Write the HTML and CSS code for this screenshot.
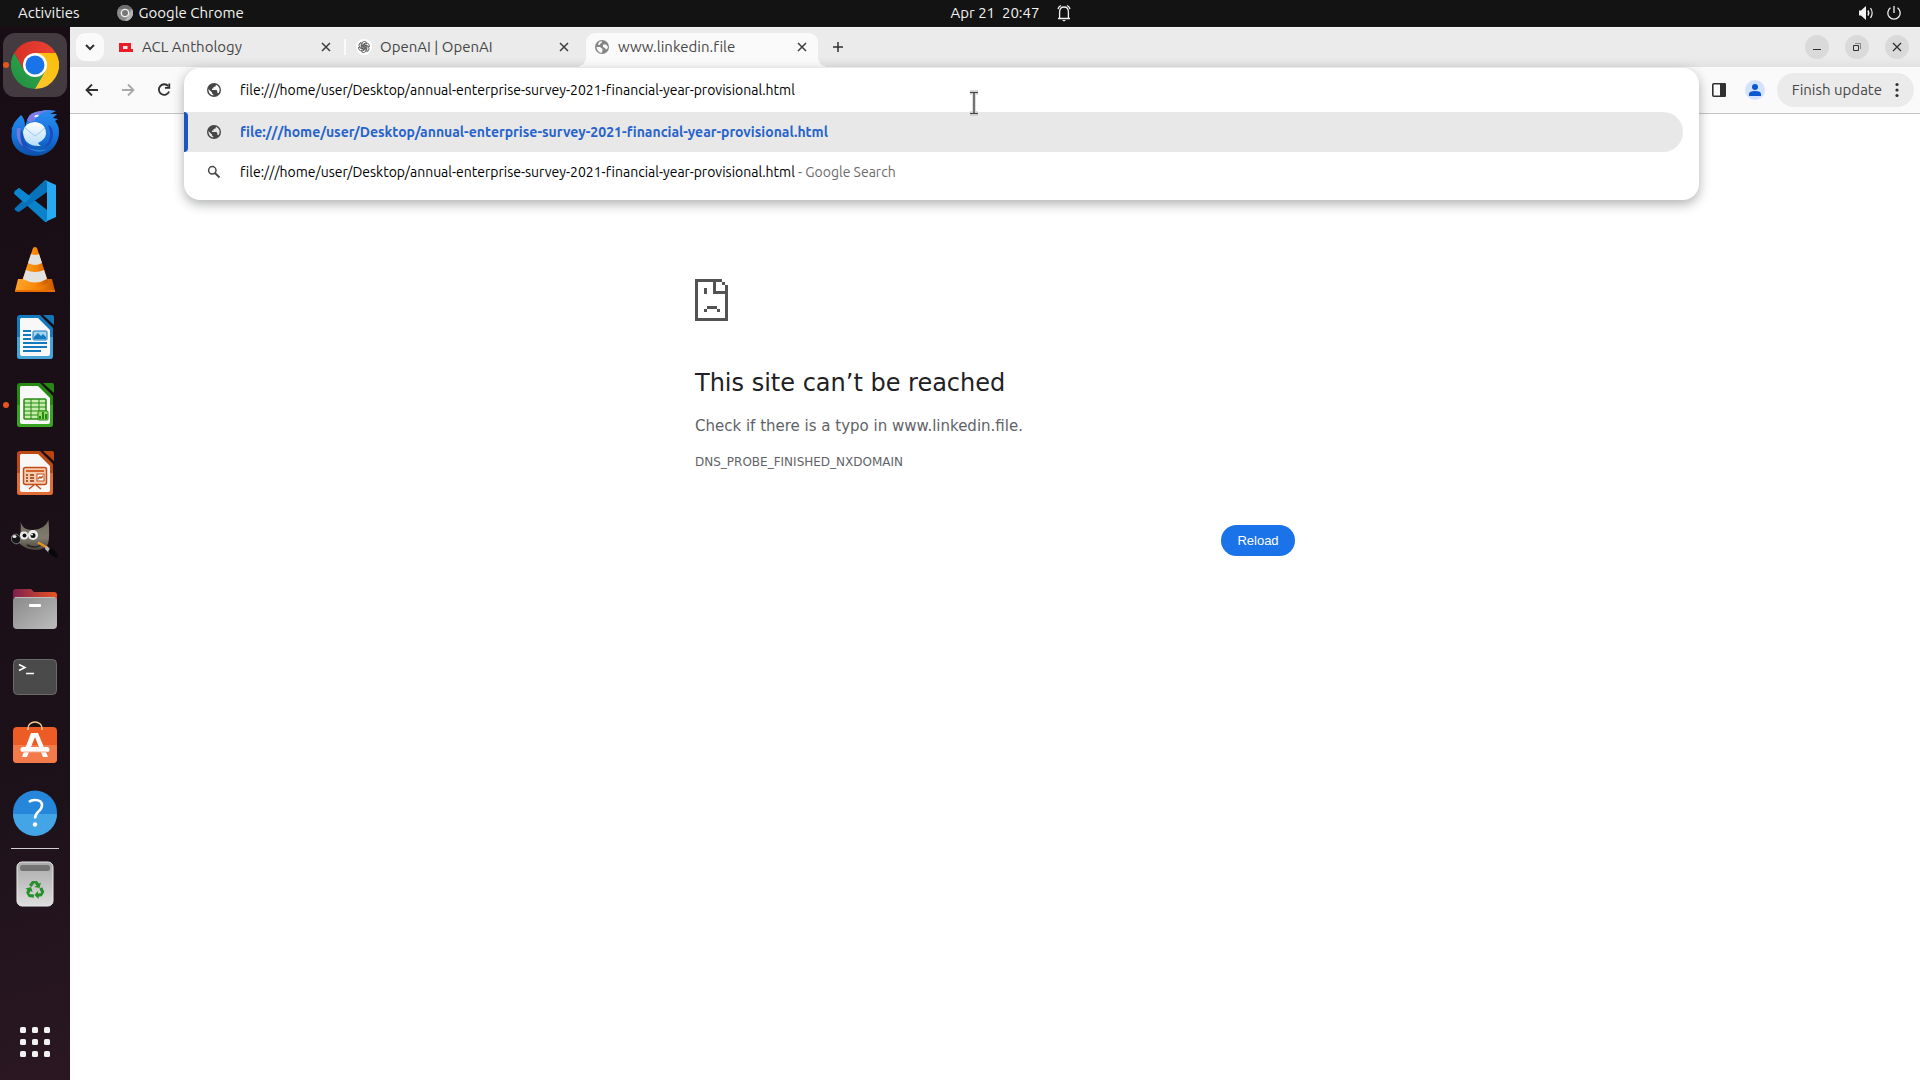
FILE: index.html
```html
<!DOCTYPE html>
<html lang="en">
<head>
<meta charset="utf-8">
<title>www.linkedin.file</title>
<link rel="stylesheet" href="styles.css">
</head>
<body>
<header class="topbar">
  <div class="topbar-left">
    <button class="bar-button">Activities</button>
    <button class="bar-button app-menu">
      <svg width="16" height="16" viewBox="0 0 48 48"><circle cx="24" cy="24" r="24" fill="#8a8a8a"/><path d="M3 12A24 24 0 0 1 45 12H24Z" fill="#6d6d6d"/><path d="M45 12A24 24 0 0 1 24 48L35 29Z" fill="#b5b5b5"/><circle cx="24" cy="24" r="11" fill="#777" stroke="#f2f2f2" stroke-width="4"/></svg>
      Google Chrome
    </button>
  </div>
  <button class="bar-button clock">
    <span>Apr 21&nbsp; 20:47</span>
    <svg width="16" height="18" viewBox="0 0 16 18" fill="none" stroke="#f2f2f2" stroke-width="1.3"><path d="M2 14.5H14M3.6 14V8C3.6 4.6 5.3 3 8 3S12.400 4.600 12.400 8V14M2 5Q2.600 2.600 5 1.500M14 5Q13.400 2.600 11 1.500"/><path d="M6 16H10L8 17.500Z" fill="#f2f2f2" stroke="none"/></svg>
  </button>
  <div class="topbar-right">
    <svg width="16" height="16" viewBox="0 0 16 16" fill="none" stroke="#f2f2f2"><path d="M1 5.500H3L8 1V15L3 10.500H1Z" fill="#f2f2f2" stroke="none"/><path d="M10 5.500Q11.500 8 10 10.500" stroke-width="1.500"/><path d="M12.500 3Q15.800 8 12.500 13" stroke-width="1.200"/></svg>
    <svg width="16" height="16" viewBox="0 0 16 16" fill="none" stroke="#f2f2f2" stroke-width="1.300"><path d="M4.500 2.800A6.200 6.200 0 1 0 11.500 2.800M8 1V8"/></svg>
  </div>
</header>
<div class="desktop">
  <nav class="dock" aria-label="Dock">
    <button class="dock-item running focused" aria-label="Google Chrome">
      <svg class="dock-icon" viewBox="0 0 48 48"><defs><linearGradient id="cr" x1="0" x2="1"><stop stop-color="#d93025"/><stop offset="1" stop-color="#ea4335"/></linearGradient><linearGradient id="cg" y1="1" y2="0"><stop stop-color="#1e8e3e"/><stop offset="1" stop-color="#34a853"/></linearGradient><linearGradient id="cy" y1="1" y2="0"><stop stop-color="#fcc934"/><stop offset="1" stop-color="#fbbc04"/></linearGradient></defs><path d="M24 12H44.800A24 24 0 0 0 3.200 12L13.600 30Z" fill="url(#cr)"/><path d="M13.600 30L3.200 12A24 24 0 0 0 24 48L34.400 30Z" fill="url(#cg)"/><path d="M24 12H44.800A24 24 0 0 1 24 48L34.400 30Z" fill="url(#cy)"/><circle cx="24" cy="24" r="12" fill="#fff"/><circle cx="24" cy="24" r="9.500" fill="#1a73e8"/></svg>
    </button>
    <button class="dock-item" aria-label="Thunderbird">
      <svg class="dock-icon" viewBox="0 0 48 48"><defs><linearGradient id="tb" x2="0" y2="1"><stop stop-color="#2d8cf0"/><stop offset=".6" stop-color="#1373d9"/><stop offset="1" stop-color="#0b4fa8"/></linearGradient><linearGradient id="te" x2="0" y2="1"><stop stop-color="#fff"/><stop offset="1" stop-color="#b5dcfb"/></linearGradient></defs><path d="M10 6C7 9 3 13 2 17Q0 19 1 22C-2 36 9 47 24 47C38 47 48 36 48 23Q48 16 44 12L47 10L42 9L46 5L39 5L45 2Q36 0 30 2Q18 3 16 11L14 18Q14 9 10 6Z" fill="url(#tb)"/><path d="M16 11Q18 3 30 2L40 1Q26 4 23 12L18 13Z" fill="#7d7be8"/><path d="M23 8Q24 5 28 6Q27 9 23 8Z" fill="#dff0ff"/><path d="M9 18Q6 24 7 30Q9 41 20 43L30 42Q14 40 12 26Z" fill="#1c4fb9"/><path d="M6 19Q4 31 12 38Q8 29 10 19Z" fill="#6d7cdf"/><path d="M37 16Q43 30 32 39Q42 36 42 25Q42 18 37 16Z" fill="#1c4ac2"/><path d="M12 23Q14 13 24 13Q35 14 35 25Q34 31 27 34Q28 36 30 37Q13 38 12 23Z" fill="url(#te)"/><path d="M14 19L24 27Q29 24 34 19" fill="none" stroke="#9bc7ec"/><path d="M13 36Q22 43 37 40Q26 47 13 36" fill="#2583dc"/></svg>
    </button>
    <button class="dock-item" aria-label="Visual Studio Code">
      <svg class="dock-icon" viewBox="0 0 48 48"><path d="M4 14L8 11L36 33V45L34 45L3.500 17Q3 15 4 14Z" fill="#0a83cb"/><path d="M4 31L34 3L36 4V15L8 35Q6 35 4 33Q3 32 4 31Z" fill="#0873ba"/><path d="M34 3L45 8V40L34 45Q36 44 36 42V6Q36 4 34 3Z" fill="#29a9f1"/><path d="M4 14L8 11L20 20L14 26L3.500 17Q3 15 4 14Z" fill="#0c86d2"/></svg>
    </button>
    <button class="dock-item" aria-label="VLC">
      <svg class="dock-icon" viewBox="0 0 48 48"><defs><linearGradient id="vo"><stop stop-color="#ffa52b"/><stop offset=".6" stop-color="#f58200"/><stop offset="1" stop-color="#c75800"/></linearGradient></defs><path d="M7 34H41L44 46L43 47H5L4 46Z" fill="url(#vo)"/><path d="M22 3Q24 1 26 3L37 36Q36 41 24 41T11 36Z" fill="url(#vo)"/><path d="M20 9Q24 11 28 9L31 18Q24 22 17 18ZM15 25Q24 29 33 25L36 34Q24 41 12 34Z" fill="#e2e2e0"/><path d="M4 45H44V47H4Z" fill="#e86e00"/></svg>
    </button>
    <button class="dock-item" aria-label="LibreOffice Writer">
      <svg class="dock-icon" viewBox="0 0 48 48"><path d="M9 2H29L42 15V43Q42 46 39 46H9Q6 46 6 43V5Q6 2 9 2Z" fill="#137abf"/><path d="M6 24H42V43Q42 46 39 46H9Q6 46 6 43Z" fill="#46a3d8"/><path d="M10 5H27L39 17V41Q39 43 37 43H11Q9 43 9 41V6Z" fill="#f8f8f8"/><path d="M32 2H41Q43 2 43 4V12Z" fill="#1976b5"/><path d="M12 18H20M12 22H20M12 26H20M12 30H36M12 34H36M12 38H30" stroke="#137abf" stroke-width="2"/><rect x="22" y="18" width="14" height="9" rx="1" fill="#a7d4ef" stroke="#137abf"/><path d="M23 26V24L27 20L30 23L32 21L35 24V26Z" fill="#137abf"/></svg>
    </button>
    <button class="dock-item running" aria-label="LibreOffice Calc">
      <svg class="dock-icon" viewBox="0 0 48 48"><path d="M9 2H29L42 15V43Q42 46 39 46H9Q6 46 6 43V5Q6 2 9 2Z" fill="#258a12"/><path d="M6 24H42V43Q42 46 39 46H9Q6 46 6 43Z" fill="#39a322"/><path d="M10 5H27L39 17V41Q39 43 37 43H11Q9 43 9 41V6Z" fill="#f8f8f8"/><path d="M32 2H41Q43 2 43 4V12Z" fill="#258a12"/><rect x="13" y="18" width="22" height="20" rx="1" fill="#c8edaf" stroke="#258a12" stroke-width="1.500"/><path d="M13 22H35M13 26H35M13 30H35M13 34H35M20 18V38M28 18V38" stroke="#258a12"/><rect x="27" y="30" width="10" height="9" rx="1" fill="#9bdc72" stroke="#258a12"/><path d="M29 38V35M32 38V31M35 38V33" stroke="#258a12" stroke-width="2"/></svg>
    </button>
    <button class="dock-item" aria-label="LibreOffice Impress">
      <svg class="dock-icon" viewBox="0 0 48 48"><path d="M9 2H29L42 15V43Q42 46 39 46H9Q6 46 6 43V5Q6 2 9 2Z" fill="#bd4a15"/><path d="M6 24H42V43Q42 46 39 46H9Q6 46 6 43Z" fill="#df6d35"/><path d="M10 5H27L39 17V41Q39 43 37 43H11Q9 43 9 41V6Z" fill="#f8f8f8"/><path d="M32 2H41Q43 2 43 4V12Z" fill="#b64713"/><rect x="12.500" y="18.500" width="23" height="17" rx="2" fill="#f7cdb0" stroke="#c04d1a" stroke-width="1.500"/><path d="M15 22H33" stroke="#d2622c" stroke-width="2"/><path d="M19 26H23M19 29H23M19 32H23M15 26H17M15 29H17M15 32H17" stroke="#943209" stroke-width="1.500"/><rect x="26" y="25" width="7" height="7" fill="#fff" stroke="#c04d1a"/><path d="M27 30L29 28L30 29L32 27M23 36L18 40M25 36L30 40" stroke="#c04d1a" stroke-width="1.500" fill="none"/></svg>
    </button>
    <button class="dock-item" aria-label="GIMP">
      <svg class="dock-icon" viewBox="0 0 48 48"><defs><linearGradient id="gm" x2="0" y2="1"><stop stop-color="#6d6a5d"/><stop offset=".6" stop-color="#807b6d"/><stop offset="1" stop-color="#45433c"/></linearGradient></defs><path d="M9.500 4.500Q11 11 17 12.500Q26 14 32 10Q36 7 37.500 3Q39 20 37 27Q34 33 24 33Q13 32 7 25Q11 14 9.500 4.500Z" fill="url(#gm)"/><circle cx="13" cy="18.500" r="4" fill="#eee"/><circle cx="22" cy="18" r="5" fill="#eee"/><circle cx="13.500" cy="18.500" r="2" fill="#111"/><circle cx="22" cy="18.500" r="2.500" fill="#111"/><circle cx="21" cy="17.500" r="1" fill="#fff"/><ellipse cx="5" cy="22" rx="4.500" ry="5" fill="#161616" stroke="#85878a" stroke-width=".8" transform="rotate(-35 5 22)"/><ellipse cx="3.500" cy="19.500" rx="2" ry="1.500" fill="#e4e4e4"/><path d="M16 28Q24 32 30 28" stroke="#24231f" stroke-width="1.500" fill="none"/><path d="M27 25.500L37 31" stroke="#e99425" stroke-width="2.500"/><path d="M35 29L41 33L38 36L34 32Z" fill="#bbb"/><path d="M39 31Q46 33 47 41Q41 40 37 35Z" fill="#080808"/></svg>
    </button>
    <button class="dock-item" aria-label="Files">
      <svg class="dock-icon" viewBox="0 0 48 48"><defs><linearGradient id="ff"><stop stop-color="#7d2050"/><stop offset="1" stop-color="#e95420"/></linearGradient><linearGradient id="fg" x2="1" y2="1"><stop stop-color="#898989"/><stop offset="1" stop-color="#bdbdbd"/></linearGradient></defs><path d="M5 4H20L23 7H43Q46 7 46 10V20H2V7Q2 4 5 4Z" fill="url(#ff)"/><rect x="2" y="12" width="44" height="32" rx="4" fill="url(#fg)"/><path d="M4 12.500H44" stroke="#bdbdbd"/><rect x="18" y="19" width="12" height="3" rx="1" fill="#fff"/></svg>
    </button>
    <button class="dock-item" aria-label="Terminal">
      <svg class="dock-icon" viewBox="0 0 48 48"><rect x="2.500" y="6.500" width="43" height="35" rx="4" fill="#4a4a4a" stroke="#6a6a6a"/><path d="M8 11.500L14 14.500L8 17.500M15 20.500H23" fill="none" stroke="#fff" stroke-width="1.500"/></svg>
    </button>
    <button class="dock-item" aria-label="Ubuntu Software">
      <svg class="dock-icon" viewBox="0 0 48 48"><rect x="2" y="6" width="44" height="36" rx="4" fill="#ee5c26"/><path d="M2 24H46V38Q46 42 42 42H6Q2 42 2 38Z" fill="#f37b4b"/><path d="M17 9V7A7 6 0 0 1 31 7V9" fill="none" stroke="#f5c98a" stroke-width="1.500"/><path d="M20 12H27L37 36H32L24 16L16 36H11Z" fill="#fff"/><path d="M12 28.500H36" stroke="#fff" stroke-width="5" stroke-linecap="round"/><path d="M12 31H36" stroke="#f2a585"/></svg>
    </button>
    <button class="dock-item" aria-label="Help">
      <svg class="dock-icon" viewBox="0 0 48 48"><circle cx="24" cy="23.500" r="22" fill="#2686da"/><path d="M2 25A22 22 0 0 0 46 25Z" fill="#44a5e6"/><path d="M18 13Q20 11 24 11Q31 11 31 16.500Q31 19.500 27.500 22.500Q24 25.500 24 29.500" fill="none" stroke="#fff" stroke-width="2.500"/><circle cx="24" cy="35.500" r="2.200" fill="#fff"/></svg>
    </button>
    <hr class="dock-separator">
    <button class="dock-item" aria-label="Trash">
      <svg class="dock-icon" viewBox="0 0 48 48"><defs><linearGradient id="tr" x2="0" y2="1"><stop stop-color="#aaa"/><stop offset="1" stop-color="#ddd"/></linearGradient></defs><rect x="6" y="2" width="36" height="44" rx="5" fill="url(#tr)" stroke="#ececec"/><rect x="9" y="5" width="30" height="6" rx="2.500" fill="#747474"/><g fill="#26902a"><path id="arrow" d="M18 25L21 21H26L28 23.500L30 22.500L28.500 28L23.500 27L25.500 25.500L23.500 23L20.500 27Z"/><use href="#arrow" transform="rotate(120 24 30)"/><use href="#arrow" transform="rotate(240 24 30)"/></g></svg>
    </button>
    <button class="dock-item show-apps" aria-label="Show Applications">
      <svg class="dock-icon" viewBox="0 0 48 48" fill="#f2f2f2"><g id="dots"><rect x="9" y="9" width="6" height="6" rx="1.500"/><rect x="21" y="9" width="6" height="6" rx="1.500"/><rect x="33" y="9" width="6" height="6" rx="1.500"/></g><use href="#dots" y="12"/><use href="#dots" y="24"/></svg>
    </button>
  </nav>

  <div class="browser">
    <div class="tabstrip">
      <button class="tab-search" aria-label="Search tabs"><svg width="16" height="16" viewBox="0 0 16 16" fill="none" stroke="#303030" stroke-width="2"><path d="M4 6L8 10L12 6"/></svg></button>
      <div class="tabs">
        <div class="tab">
          <svg width="16" height="16" viewBox="0 0 16 16" fill="#ed1c24"><path fill-rule="evenodd" d="M1 4H13V10H15V13H1ZM5 7V10H9.500V7Z"/></svg>
          <span class="tab-title">ACL Anthology</span>
          <button class="tab-close" aria-label="Close tab"><svg width="16" height="16" viewBox="0 0 16 16" stroke="#3c3c3c" stroke-width="1.500"><path d="M4 4L12 12M12 4L4 12"/></svg></button>
        </div>
        <div class="tab divided">
          <svg width="16" height="16" viewBox="0 0 16 16"><circle cx="8" cy="8" r="8" fill="#fff"/><g fill="none" stroke="#303030" stroke-width=".7"><path id="petal" d="M6 8.800V5Q6 2.400 8.300 2.400Q9.700 2.400 10.500 3.300L7.300 5.200V8"/><use href="#petal" transform="rotate(60 8 8)"/><use href="#petal" transform="rotate(120 8 8)"/><use href="#petal" transform="rotate(180 8 8)"/><use href="#petal" transform="rotate(240 8 8)"/><use href="#petal" transform="rotate(300 8 8)"/></g></svg>
          <span class="tab-title">OpenAI | OpenAI</span>
          <button class="tab-close" aria-label="Close tab"><svg width="16" height="16" viewBox="0 0 16 16" stroke="#3c3c3c" stroke-width="1.500"><path d="M4 4L12 12M12 4L4 12"/></svg></button>
        </div>
        <div class="tab active">
          <svg width="16" height="16" viewBox="0 0 16 16"><circle cx="8" cy="8" r="7" fill="#858585"/><path d="M2.500 8H6L8.500 10V12L7.500 14Q3 13 2.500 8ZM5 3L8 2Q8 4 6.500 4.500L5.500 6H4ZM9 5.500H12L14 8Q13.500 10 12 10.500L11 9L9 8Z" fill="#fafafa"/></svg>
          <span class="tab-title">www.linkedin.file</span>
          <button class="tab-close" aria-label="Close tab"><svg width="16" height="16" viewBox="0 0 16 16" stroke="#3c3c3c" stroke-width="1.500"><path d="M4 4L12 12M12 4L4 12"/></svg></button>
        </div>
      </div>
      <button class="new-tab" aria-label="New tab"><svg width="16" height="16" viewBox="0 0 16 16" stroke="#303030" stroke-width="1.500"><path d="M3 8H13M8 3V13"/></svg></button>
      <div class="window-controls">
        <button class="window-button" aria-label="Minimize"><svg width="16" height="16" viewBox="0 0 16 16"><path d="M4 10.500H12" stroke="#303030"/></svg></button>
        <button class="window-button" aria-label="Restore"><svg width="16" height="16" viewBox="0 0 16 16" fill="none" stroke="#303030"><path d="M6 4.500H11.500V10" stroke="#888"/><path d="M4.500 6.500H9.500V11.500H4.500Z"/></svg></button>
        <button class="window-button" aria-label="Close"><svg width="16" height="16" viewBox="0 0 16 16"><path d="M4 4L12 12M12 4L4 12" stroke="#303030" stroke-width="1.300"/></svg></button>
      </div>
    </div>

    <div class="toolbar">
      <button class="tool" aria-label="Back"><svg width="16" height="16" viewBox="0 0 16 16" fill="none" stroke="#303030" stroke-width="1.800"><path d="M14 8H3M8 2.500L2.500 8L8 13.500"/></svg></button>
      <button class="tool" aria-label="Forward" disabled><svg width="16" height="16" viewBox="0 0 16 16" fill="none" stroke="#a8a8a8" stroke-width="1.800"><path d="M2 8H13M8 2.500L13.500 8L8 13.500"/></svg></button>
      <button class="tool" aria-label="Reload page"><svg width="16" height="16" viewBox="0 0 16 16" fill="none" stroke="#303030" stroke-width="1.800"><path d="M12.300 4.200A5.300 5.300 0 1 0 13.100 9.500"/><path d="M13.300 1.500V5.800H9" /></svg></button>
      <div class="omnibox">
        <div class="omnibox-popup">
          <label class="omnibox-row omnibox-field">
            <svg width="16" height="16" viewBox="0 0 16 16"><circle cx="8" cy="8" r="7" fill="#474747"/><path d="M2.400 7L6 10.500V11.500L7.300 12.500V13.600Q2.300 12.500 2.400 7ZM10 2.800Q13.600 4.500 13.600 8Q13.500 10 12.500 11.300L11.300 10.800V9L10.500 8H6V6.500H7.500V5L9.500 4.500Z" fill="#fff"/></svg>
            <input class="url-input" aria-label="Address and search bar" value="file:///home/user/Desktop/annual-enterprise-survey-2021-financial-year-provisional.html">
          </label>
          <a class="omnibox-row selected" href="#">
            <svg width="16" height="16" viewBox="0 0 16 16"><circle cx="8" cy="8" r="7" fill="#474747"/><path d="M2.400 7L6 10.500V11.500L7.300 12.500V13.600Q2.300 12.500 2.400 7ZM10 2.800Q13.600 4.500 13.600 8Q13.500 10 12.500 11.300L11.300 10.800V9L10.500 8H6V6.500H7.500V5L9.500 4.500Z" fill="#e8e8e8"/></svg>
            <span>file:///home/user/Desktop/annual-enterprise-survey-2021-financial-year-provisional.html</span>
          </a>
          <a class="omnibox-row" href="#">
            <svg width="16" height="16" viewBox="0 0 16 16" fill="none" stroke="#474747" stroke-width="1.500"><circle cx="6.300" cy="6.300" r="3.700"/><path d="M9 9L13.500 13.500" stroke-width="1.800"/></svg>
            <span>file:///home/user/Desktop/annual-enterprise-survey-2021-financial-year-provisional.html <span class="hint">- Google Search</span></span>
          </a>
        </div>
      </div>
      <button class="tool" aria-label="Side panel"><svg width="16" height="16" viewBox="0 0 16 16"><rect x="1.800" y="1.800" width="12.400" height="12.400" rx="1" fill="none" stroke="#303030" stroke-width="1.600"/><path d="M9 1H14L15 2V14L14 15H9Z" fill="#303030"/></svg></button>
      <button class="tool" aria-label="Profile"><svg width="20" height="20" viewBox="0 0 20 20"><circle cx="10" cy="10" r="10" fill="#d3e3fd"/><circle cx="10" cy="7" r="3" fill="#0b57d0"/><path d="M4 16V14Q4 11 10 11T16 14V16Z" fill="#0b57d0"/></svg></button>
      <button class="update">Finish update <svg width="16" height="16" viewBox="0 0 16 16" fill="#303030"><circle cx="8" cy="2.500" r="1.600"/><circle cx="8" cy="8" r="1.600"/><circle cx="8" cy="13.500" r="1.600"/></svg></button>
    </div>

    <main class="page">
      <section class="error">
        <svg width="33" height="42" viewBox="0 0 33 42" shape-rendering="crispEdges" fill="#535353"><path d="M0 0H27V3H21V12H33V42H0ZM3 3V39H30V15H18V3Z" fill-rule="evenodd"/><path d="M27 3H30V6H27ZM9 9H12V15H9ZM12 27H22V30H12ZM9 30H12V33H9ZM22 30H25V33H22Z"/><path d="M30 6H33V12H30Z"/></svg>
        <h1>This site can’t be reached</h1>
        <p class="summary">Check if there is a typo in www.linkedin.file.</p>
        <p class="code">DNS_PROBE_FINISHED_NXDOMAIN</p>
        <button class="reload">Reload</button>
      </section>
    </main>
  </div>
</div>
<svg class="cursor" width="12" height="26" viewBox="0 0 12 26" fill="none"><path d="M2 2.500H5L6 4L7 2.500H10M6 3V23M2 23.500H5L6 22L7 23.500H10" stroke="#bbb" stroke-width="4"/><path d="M2 2.500H5L6 4L7 2.500H10M6 3V23M2 23.500H5L6 22L7 23.500H10" stroke="#fff" stroke-width="3"/><path d="M2 2.500H10M6 3V23M2 23.500H10" stroke="#444" stroke-width="1.500"/></svg>
</body>
</html>
```
FILE: styles.css
```css
* { box-sizing: border-box; }

body {
  margin: 0;
  min-height: 100vh;
  display: flex;
  flex-direction: column;
  background: #fff;
  font-family: Ubuntu, "Noto Sans", sans-serif;
  font-size: 15px;
  line-height: 20px;
}

svg { display: block; flex: none; }

button {
  display: flex;
  align-items: center;
  justify-content: center;
  padding: 0;
  border: 0;
  background: none;
  font: inherit;
  color: inherit;
}

/* Desktop panel */
.topbar {
  display: grid;
  grid-template-columns: 1fr auto 1fr;
  align-items: center;
  height: 27px;
  padding: 0 18px 1px;
  background: #131313;
  color: #f2f2f2;
}
.topbar-left { display: flex; gap: 37px; }
.app-menu { gap: 6px; }
.clock { gap: 17px; padding-left: 103px; }
.topbar-right { display: flex; justify-content: flex-end; gap: 12px; }

.desktop { flex: 1; display: flex; }

/* Dock */
.dock {
  flex: none;
  width: 70px;
  display: flex;
  flex-direction: column;
  align-items: center;
  gap: 4px;
  padding: 6px 0;
  background: linear-gradient(165deg, #180d14, #1c1118 70%, #2a1722);
}
.dock-item {
  position: relative;
  flex: none;
  width: 64px;
  height: 64px;
  border-radius: 12px;
}
.dock-icon { width: 48px; height: 48px; }
.focused { background: #443b41; }
.running::before {
  content: "";
  position: absolute;
  left: 0;
  top: 29px;
  width: 6px;
  height: 6px;
  border-radius: 50%;
  background: #e95420;
}
.dock-separator {
  width: 48px;
  height: 1px;
  margin: -1px 0;
  border: 0;
  background: #d3d0d2;
}
.show-apps { margin-top: auto; }

/* Browser window */
.browser {
  flex: 1;
  min-width: 0;
  display: flex;
  flex-direction: column;
}
.tabstrip {
  display: flex;
  align-items: center;
  height: 40px;
  padding: 0 11px 0 6px;
  background: linear-gradient(#f6f6f6 1px, #ebebeb 1px 75%, #e2e2e2);
  font-variant-ligatures: none;
}
.tab-search {
  width: 28px;
  height: 28px;
  border-radius: 9px;
  background: #fafafa;
}
.tabs {
  display: flex;
  align-self: stretch;
  gap: 6px;
  padding: 6px 6px 0;
}
.tab {
  position: relative;
  width: 232px;
  display: flex;
  align-items: center;
  gap: 8px;
  padding: 0 8px 6px;
  color: #474747;
}
.tab-title { flex: 1; }
.divided::before {
  content: "";
  position: absolute;
  left: -4px;
  top: 6px;
  width: 2px;
  height: 16px;
  background: #fafafa;
}
.active {
  background: #fafafa;
  border-radius: 9px 9px 0 0;
}
.active::before,
.active::after {
  content: "";
  position: absolute;
  bottom: 0;
  width: 10px;
  height: 10px;
}
.active::before {
  left: -10px;
  background: radial-gradient(circle at 0 0, transparent 10px, #fafafa 10px);
}
.active::after {
  right: -10px;
  background: radial-gradient(circle at 100% 0, transparent 10px, #fafafa 10px);
}
.new-tab { width: 28px; height: 28px; }
.window-controls {
  display: flex;
  gap: 16px;
  margin-left: auto;
}
.window-button {
  width: 24px;
  height: 24px;
  border-radius: 50%;
  background: #dadada;
}

.toolbar {
  position: relative;
  z-index: 1;
  display: flex;
  align-items: center;
  height: 47px;
  padding: 0 6px 0 4px;
  background: #fafafa;
  border-bottom: 1px solid #c4c4c4;
  font-variant-ligatures: none;
}
.tool { width: 36px; height: 36px; }
.omnibox {
  position: relative;
  flex: 1;
  align-self: stretch;
  margin: 0 2px;
}
.omnibox-popup {
  position: absolute;
  top: 1px;
  left: 0;
  right: 0;
  padding-bottom: 8px;
  overflow: hidden;
  border-radius: 16px;
  background: #fff;
  box-shadow: 0 4px 12px rgba(32, 36, 40, .36);
}
.omnibox-row {
  display: flex;
  align-items: center;
  gap: 18px;
  height: 40px;
  padding-left: 22px;
  color: #000;
  font-size: 14px;
  text-decoration: none;
}
.omnibox-field { height: 44px; }
.url-input {
  flex: 1;
  padding: 0;
  border: 0;
  outline: 0;
  background: none;
  color: #000;
  font: inherit;
  font-variant-ligatures: none;
}
.selected {
  position: relative;
  margin-right: 16px;
  border-radius: 0 20px 20px 0;
  background: #e8e8e8;
  color: #2663cb;
  font-weight: 700;
}
.selected::before {
  content: "";
  position: absolute;
  left: 0;
  top: 0;
  width: 4px;
  height: 40px;
  border-radius: 0 4px 4px 0;
  background: #1a56c4;
}
.hint { color: #6b6b6b; }
.update {
  gap: 7px;
  height: 34px;
  margin-left: 4px;
  padding: 0 9px 0 15px;
  border-radius: 17px;
  background: #ebebeb;
  color: #474747;
  white-space: nowrap;
}

/* Network error page */
.page {
  flex: 1;
  padding: 165px 24px 0;
  font-family: "DejaVu Sans", sans-serif;
  color: #5f6368;
}
.error {
  display: flex;
  flex-direction: column;
  max-width: 600px;
  margin: 0 auto;
}
.error h1 {
  margin: 47px 0 16px;
  color: #202124;
  font-size: 24px;
  font-weight: 400;
  line-height: 30px;
}
.summary {
  margin: 0 0 14px;
  font-size: 15px;
  line-height: 24px;
}
.code {
  margin: 0 0 53px;
  font-size: 12px;
  line-height: 20px;
}
.reload {
  align-self: flex-end;
  width: 74px;
  height: 31px;
  border-radius: 16px;
  background: #1a73e8;
  color: #fff;
  font-family: "Liberation Sans", Arial, sans-serif;
  font-size: 13px;
}

.cursor {
  position: absolute;
  left: 968px;
  top: 90px;
  z-index: 2;
}
```
